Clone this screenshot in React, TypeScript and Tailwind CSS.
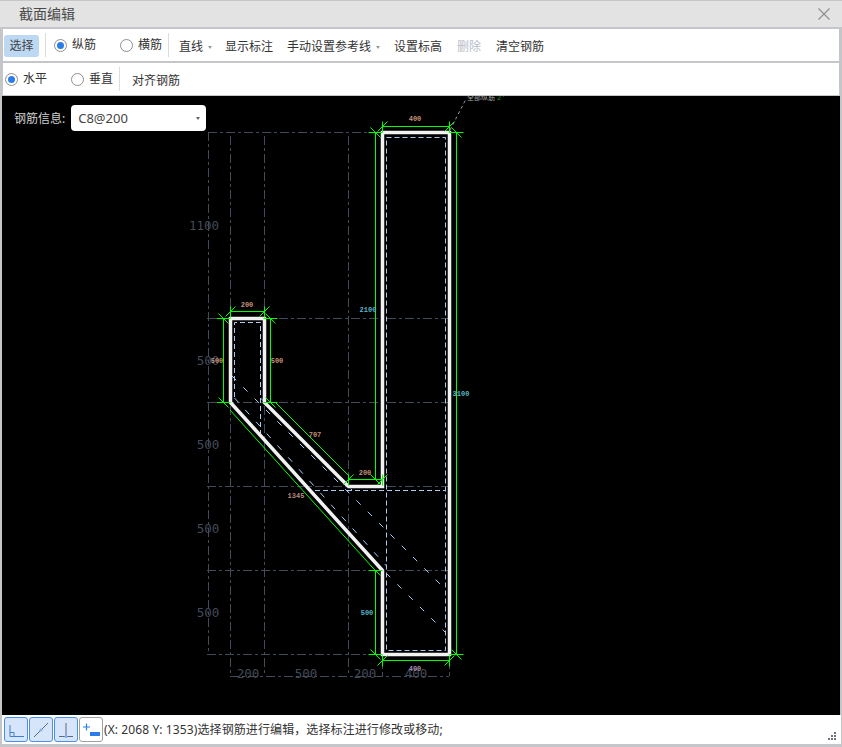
import React from "react";

const cjk = { fontFamily: '"Noto Sans", "Noto Sans CJK SC", sans-serif' };
const GREEN = "#00ff00";
const GRID = "#434a58";
const BAR = "#a9cdf2";
const ORANGE = "#c79078";
const CYAN = "#58b4c8";

const Radio = ({ checked = false, label }: { checked?: boolean; label: string }) => (
  <div className="flex items-center gap-[5px]">
    <span className="flex h-[13px] w-[13px] items-center justify-center rounded-full border border-[#8f8f8f] bg-white">
      {checked && <span className="h-[7px] w-[7px] rounded-full bg-[#2b7de9]" />}
    </span>
    <span className="text-xs leading-4 text-[#333]">{label}</span>
  </div>
);

const Divider = () => <span className="block h-6 w-px bg-[#dcdcdc]" />;

const TBtn = ({ active, children }: { active?: boolean; children: React.ReactNode }) => (
  <div
    className={
      active
        ? "flex h-[25px] w-6 items-center justify-center rounded-[3px] border border-[#4a90e8] bg-[#d7e5fb]"
        : "flex h-[25px] w-6 items-center justify-center rounded-[3px] border border-[#a0a0a0] bg-white"
    }
  >
    <svg width="22" height="23" viewBox="0 0 22 23">
      {children}
    </svg>
  </div>
);

// end marks of a dimension line
const HEnd = ({ x, y }: { x: number; y: number }) => (
  <g stroke={GREEN} strokeWidth="1">
    <line x1={x} y1={y - 5} x2={x} y2={y + 6} />
    <line x1={x - 5} y1={y + 5} x2={x + 5} y2={y - 5} />
  </g>
);

const VEnd = ({ x, y }: { x: number; y: number }) => (
  <g stroke={GREEN} strokeWidth="1">
    <line x1={x - 7} y1={y} x2={x + 7} y2={y} />
    <line x1={x - 5} y1={y - 5} x2={x + 5} y2={y + 5} />
  </g>
);

const HDim = ({ x1, x2, y }: { x1: number; x2: number; y: number }) => (
  <g>
    <line x1={x1} y1={y} x2={x2} y2={y} stroke={GREEN} />
    <HEnd x={x1} y={y} />
    <HEnd x={x2} y={y} />
  </g>
);

const VDim = ({ x, y1, y2 }: { x: number; y1: number; y2: number }) => (
  <g>
    <line x1={x} y1={y1} x2={x} y2={y2} stroke={GREEN} />
    <VEnd x={x} y={y1} />
    <VEnd x={x} y={y2} />
  </g>
);

const Label = ({ x, y, c, t }: { x: number; y: number; c: string; t: string }) => (
  <text x={x} y={y} fill={c} fontSize="7" fontWeight="700" textAnchor="middle" fontFamily='"Liberation Mono", monospace'>
    {t}
  </text>
);

const Big = ({ x, y, t }: { x: number; y: number; t: string }) => (
  <text x={x} y={y} fill="#434a58" fontSize="12.5" textAnchor="middle" fontFamily='"DejaVu Sans Mono", monospace'>
    {t}
  </text>
);

const Drawing = () => (
  <svg width="838" height="619" viewBox="2 96 838 619" className="block">
    {/* reference grid */}
    <g stroke={GRID} strokeWidth="1" strokeDasharray="9 3 3 3" fill="none">
      <line x1="208" y1="132.5" x2="381" y2="132.5" />
      <line x1="207" y1="318.5" x2="449" y2="318.5" />
      <line x1="207" y1="402.5" x2="449" y2="402.5" />
      <line x1="207" y1="486.5" x2="449" y2="486.5" />
      <line x1="207" y1="570.5" x2="449" y2="570.5" />
      <line x1="207" y1="654.5" x2="449" y2="654.5" />
      <line x1="208.5" y1="132" x2="208.5" y2="654" />
      <line x1="230.5" y1="136" x2="230.5" y2="676" />
      <line x1="264.5" y1="136" x2="264.5" y2="676" />
      <line x1="348.5" y1="136" x2="348.5" y2="676" />
      <line x1="382.5" y1="654" x2="382.5" y2="676" />
      <line x1="449.5" y1="654" x2="449.5" y2="676" />
      <line x1="230" y1="676.5" x2="449" y2="676.5" />
    </g>
    <Big x={204} y={230} t="1100" />
    <Big x={208} y={365} t="500" />
    <Big x={208} y={449} t="500" />
    <Big x={208} y={533} t="500" />
    <Big x={208} y={617} t="500" />
    <Big x={248} y={678} t="200" />
    <Big x={306} y={678} t="500" />
    <Big x={365} y={678} t="200" />
    <Big x={416} y={678} t="400" />

    {/* rebar */}
    <g stroke={BAR} strokeWidth="1" strokeDasharray="5 3" fill="none">
      <path d="M386.5 137.5H445.5V650.5H386.5Z" />
      <path d="M234.5 397V322.5H260.5V433" />
      <line x1="315" y1="490.5" x2="446" y2="490.5" />
      <line x1="232" y1="376" x2="446" y2="590" strokeDasharray="6 10" />
      <line x1="386" y1="573" x2="445" y2="632" strokeDasharray="6 10" />
      <line x1="234.5" y1="398" x2="386.5" y2="566" strokeDasharray="6 10" />
      <line x1="260.5" y1="398" x2="352" y2="490" strokeDasharray="6 10" />
    </g>

    {/* section outline */}
    <path
      d="M382.5 132.5H449.5V654.5H382.5V570.5L230.5 402.5V318.5H264.5V402.5L348.5 486.5H382.5Z"
      fill="none"
      stroke="#f2f2f2"
      strokeWidth="3.5"
      strokeLinejoin="miter"
    />

    {/* dimensions */}
    <HDim x1={382.5} x2={449.5} y={126.5} />
    <HDim x1={230.5} x2={264.5} y={311.5} />
    <HDim x1={348.5} x2={382.5} y={479.5} />
    <HDim x1={382.5} x2={449.5} y={660.5} />
    <VDim x={223.5} y1={318.5} y2={402.5} />
    <VDim x={270.5} y1={318.5} y2={402.5} />
    <VDim x={375.5} y1={132.5} y2={479.5} />
    <VDim x={456.5} y1={132.5} y2={654.5} />
    <VDim x={375.5} y1={570.5} y2={654.5} />
    <line x1="275" y1="402" x2="348" y2="475" stroke={GREEN} />
    <line x1="230" y1="410" x2="373" y2="568" stroke={GREEN} />

    <Label x={415} y={121} c={ORANGE} t="400" />
    <Label x={247} y={307} c={ORANGE} t="200" />
    <Label x={217} y={363} c={ORANGE} t="500" />
    <Label x={277} y={363} c={ORANGE} t="500" />
    <Label x={315} y={437} c={ORANGE} t="707" />
    <Label x={365} y={475} c={ORANGE} t="200" />
    <Label x={296} y={498} c="#b58a80" t="1345" />
    <Label x={368} y={312} c={CYAN} t="2100" />
    <Label x={461} y={396} c={CYAN} t="3100" />
    <Label x={367} y={615} c={CYAN} t="500" />
    <Label x={415} y={671} c="#a88ab0" t="400" />

    {/* leader */}
    <line x1="450" y1="130" x2="466" y2="99" stroke="#9a9a9a" strokeDasharray="3 3" />
    <text x="467" y="100" fill="#a0a0a0" fontSize="7" fontFamily='"Noto Sans CJK SC", sans-serif'>
      全部纵筋
    </text>
    <text x="497" y="100" fill="#1f9a1f" fontSize="7" fontFamily='"Liberation Mono", monospace'>
      2'
    </text>
  </svg>
);

export default function App() {
  return (
    <div className="flex h-[747px] w-[842px] flex-col overflow-hidden bg-[#c4c6ca] pt-px" style={cjk}>
      {/* title */}
      <div className="flex h-[26px] shrink-0 items-center justify-between bg-[#e3e3e3] pl-[19px] pr-[12px]">
        <span className="text-sm leading-5 text-[#4a4a4a]">截面编辑</span>
        <svg width="12" height="12" viewBox="0 0 12 12" stroke="#8e8e8e" strokeWidth="1.1">
          <path d="M0.5 0.5L11.5 11.5M11.5 0.5L0.5 11.5" />
        </svg>
      </div>

      {/* toolbar 1 */}
      <div className="mx-[3px] mt-[2px] flex h-8 shrink-0 items-center bg-white text-xs text-[#333]">
        <div className="ml-px mt-[2px] flex h-[22px] w-[35px] items-center justify-center rounded-[3px] bg-[#bcd8f2] text-[#444]">选择</div>
        <div className="ml-[6px]">
          <Divider />
        </div>
        <div className="ml-2">
          <Radio checked label="纵筋" />
        </div>
        <div className="ml-6">
          <Radio label="横筋" />
        </div>
        <div className="ml-[6px]">
          <Divider />
        </div>
        <div className="ml-[10px] mt-[4px] flex items-center">
          直线
          <span className="ml-[5px] h-0 w-0 border-x-[2.5px] border-t-[3px] border-x-transparent border-t-[#999]" />
        </div>
        <span className="ml-[13px] mt-[4px]">显示标注</span>
        <div className="ml-[14px] mt-[4px] flex items-center">
          手动设置参考线
          <span className="ml-[5px] h-0 w-0 border-x-[2.5px] border-t-[3px] border-x-transparent border-t-[#999]" />
        </div>
        <span className="ml-[14px] mt-[4px]">设置标高</span>
        <span className="ml-[15px] mt-[4px] text-[#b9bdc9]">删除</span>
        <span className="ml-[15px] mt-[4px]">清空钢筋</span>
      </div>

      {/* toolbar 2 */}
      <div className="mx-[3px] mt-[2px] flex h-8 shrink-0 items-center bg-white text-xs text-[#333]">
        <div className="ml-[2px]">
          <Radio checked label="水平" />
        </div>
        <div className="ml-6">
          <Radio label="垂直" />
        </div>
        <div className="ml-[6px]">
          <Divider />
        </div>
        <span className="ml-3 mt-[3px]">对齐钢筋</span>
      </div>

      {/* canvas */}
      <div className="relative mx-[2px] mt-px h-[619px] shrink-0 overflow-hidden bg-black">
        <Drawing />
        <div className="absolute left-3 top-[9px] flex items-center gap-[6px]">
          <span className="mt-px text-xs text-[#d0d0d0]">钢筋信息:</span>
          <div className="flex h-[26px] w-[135px] items-center justify-between rounded bg-white pl-[7px] pr-[6px] text-[13px] text-[#444]">
            <span className="mt-px">C8@200</span>
            <span className="h-0 w-0 border-x-[2.5px] border-t-[3px] border-x-transparent border-t-[#666]" />
          </div>
        </div>
      </div>

      {/* status bar */}
      <div className="ml-[2px] mr-px flex h-[29px] shrink-0 items-center bg-white pl-[2px] text-xs text-[#333]">
        <div className="flex gap-px">
          <TBtn active>
            <path d="M5 7V18.5H19M5 14.5H9V18" stroke="#3f7fd0" fill="none" />
          </TBtn>
          <TBtn active>
            <path d="M4 19L18 5" stroke="#5a6a80" />
            <circle cx="11" cy="12" r="1.5" fill="#7fb0ea" />
          </TBtn>
          <TBtn active>
            <path d="M4 18.5H18M11 5V18.5" stroke="#5a6a80" fill="none" />
            <circle cx="11" cy="18.5" r="1.5" fill="#7fb0ea" />
          </TBtn>
        </div>
        <div className="ml-px">
          <TBtn>
            <path d="M3 9H10M6.5 5.5V12.5" stroke="#2b7de9" strokeWidth="1.2" />
            <rect x="10" y="14" width="10" height="4" fill="#2b7de9" />
          </TBtn>
        </div>
        <span className="ml-px whitespace-nowrap tracking-[0.1px]">(X: 2068 Y: 1353)选择钢筋进行编辑，选择标注进行修改或移动;</span>
        <svg className="ml-auto mr-[4px] mt-[14px]" width="9" height="9" viewBox="0 0 9 9" fill="#6b7280">
          <rect x="6" y="0" width="2" height="2" />
          <rect x="3" y="3" width="2" height="2" />
          <rect x="6" y="3" width="2" height="2" />
          <rect x="0" y="6" width="2" height="2" />
          <rect x="3" y="6" width="2" height="2" />
          <rect x="6" y="6" width="2" height="2" />
        </svg>
      </div>
    </div>
  );
}
